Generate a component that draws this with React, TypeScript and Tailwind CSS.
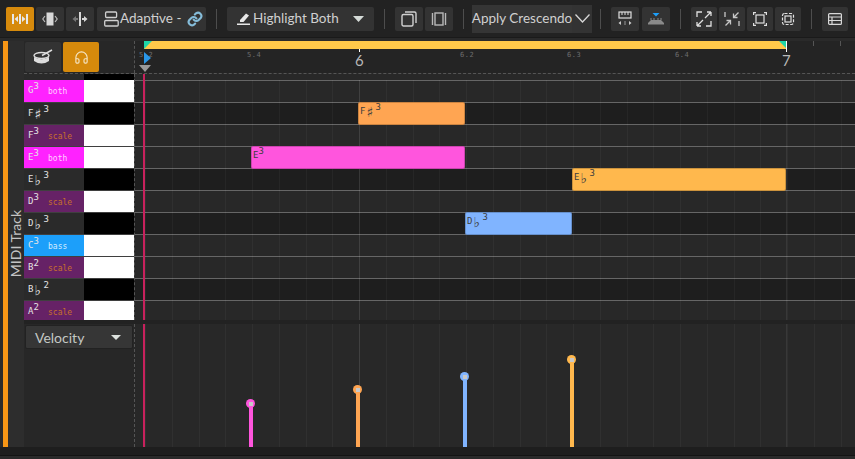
import React from "react";
import { Headphones } from "lucide-react";

type Kind = "both" | "scale" | "bass" | "plain";
const rows: { n: string; acc?: string; o: number; kind: Kind }[] = [
  { n: "G", o: 3, kind: "both" },
  { n: "F", acc: "♯", o: 3, kind: "plain" },
  { n: "F", o: 3, kind: "scale" },
  { n: "E", o: 3, kind: "both" },
  { n: "E", acc: "♭", o: 3, kind: "plain" },
  { n: "D", o: 3, kind: "scale" },
  { n: "D", acc: "♭", o: 3, kind: "plain" },
  { n: "C", o: 3, kind: "bass" },
  { n: "B", o: 2, kind: "scale" },
  { n: "B", acc: "♭", o: 2, kind: "plain" },
  { n: "A", o: 2, kind: "scale" },
];

const beatXs = Array.from({ length: 27 }, (_, i) => 10 + i * 26.75);

function Btn({ active, w = "w-[28px]", children }: { active?: boolean; w?: string; children: React.ReactNode }) {
  return (
    <div className={`${w} h-[24px] rounded-[2px] flex items-center justify-center shrink-0 ${active ? "bg-[#d68a0c]" : "bg-[#333333]"}`}>
      {children}
    </div>
  );
}

function Sep() {
  return <div className="w-px h-[20px] bg-[#4d4d4d] shrink-0" />;
}

function NoteName({ n, acc, o, color }: { n: string; acc?: string; o: number; color: string }) {
  return (
    <div className={`flex items-start leading-none [font-family:'DejaVu_Sans_Mono',monospace] whitespace-nowrap ${color}`}>
      <span className="text-[9px] mt-[4px]">{n}</span>
      {acc && <span className="text-[14px] mt-[2px] ml-px w-[8px] [font-family:'DejaVu_Sans',sans-serif]">{acc}</span>}
      <span className={`text-[9px] ${acc ? "ml-px" : ""}`}>{o}</span>
    </div>
  );
}

function KeyRow({ r, first }: { r: (typeof rows)[number]; first: boolean }) {
  const bg = { both: "bg-[#ff22ff]", scale: "bg-[#662266]", bass: "bg-[#1c9ffa]", plain: "bg-[#2a2a2a]" }[r.kind];
  const labelColor = { both: "text-[#ffd0ff]", scale: "text-[#c8702c]", bass: "text-[#d5ecff]", plain: "" }[r.kind];
  const isBlack = r.kind === "plain";
  const h = r.n === "A" ? "h-[20px]" : "h-[22px]";
  return (
    <div className={`flex ${h} ${first ? "" : "border-t border-[#3f3f3f]"} shrink-0`}>
      <div className={`w-[60px] ${bg} flex items-start pl-[4px] pt-[2px] relative`}>
        <NoteName n={r.n} acc={r.acc} o={r.o} color="text-[#e4e4e4]" />
        {!isBlack && (
          <span className={`absolute left-[24px] top-[8px] text-[8px] leading-none [font-family:'DejaVu_Sans_Mono',monospace] ${labelColor}`}>
            {r.kind}
          </span>
        )}
      </div>
      <div className={`w-[50px] ${isBlack ? "bg-black" : "bg-white"}`} />
    </div>
  );
}

function GridLines({ shift }: { shift: number }) {
  return (
    <>
      {beatXs.map((x, i) => (
        <div key={i} className="absolute top-0 bottom-0 w-px bg-white/[0.04]" style={{ left: Math.round(x) + shift }} />
      ))}
      <div className="absolute top-0 bottom-0 w-px bg-white/[0.08]" style={{ left: 224 + shift }} />
      <div className="absolute top-0 bottom-0 w-px bg-white/[0.08]" style={{ left: 651 + shift }} />
    </>
  );
}

const notes = [
  { n: "F", acc: "♯", left: 224, w: 107, top: 22, c: "bg-[#ffa552]" },
  { n: "E", left: 117, w: 214, top: 66, c: "bg-[#ff55dd]" },
  { n: "E", acc: "♭", left: 438, w: 214, top: 88, c: "bg-[#ffb84d]" },
  { n: "D", acc: "♭", left: 331, w: 107, top: 132, c: "bg-[#80b4ff]" },
];

const stems = [
  { x: 249, top: 80, c: "bg-[#ff55dd]" },
  { x: 356, top: 66, c: "bg-[#ffa552]" },
  { x: 463, top: 53, c: "bg-[#80b4ff]" },
  { x: 570, top: 36, c: "bg-[#ffb84d]" },
];

const rulerLabels = [
  { t: "5.2", x: 4 },
  { t: "5.4", x: 112 },
  { t: "6.2", x: 325 },
  { t: "6.3", x: 432 },
  { t: "6.4", x: 540 },
];

export default function App() {
  return (
    <div className="w-[855px] h-[459px] overflow-hidden bg-[#2a2a2a] flex flex-col [font-family:'Lato',sans-serif]">
      {/* toolbar */}
      <div className="h-[38px] shrink-0 bg-[#222222] border-b border-[#1a1a1a] flex items-center pl-[6px] text-[13.5px] text-[#d0d0d0]">
        <div className="flex gap-[2px]">
          <Btn active>
            <svg width="16" height="12" viewBox="0 0 16 12" fill="#e8e8e8">
              <rect x="0" y="1" width="2" height="10" />
              <rect x="14" y="1" width="2" height="10" />
              <rect x="7" y="1" width="2" height="10" />
              <path d="M2.500 6 L6 3 V9 Z M13.500 6 L10 3 V9 Z" />
            </svg>
          </Btn>
          <Btn>
            <svg width="16" height="14" viewBox="0 0 16 14" fill="none">
              <rect x="4.500" y="0.500" width="7" height="13" fill="#d8d8d8" />
              <path d="M3 4 L0.800 7 L3 10 M13 4 L15.200 7 L13 10" stroke="#bbbbbb" strokeWidth="1.200" />
            </svg>
          </Btn>
          <Btn>
            <svg width="16" height="14" viewBox="0 0 16 14">
              <rect x="7" y="0" width="2" height="14" fill="#d8d8d8" />
              <path d="M0.500 7 L4 4 V6 H6 V8 H4 V10 Z" fill="#777777" />
              <path d="M15.500 7 L12 4 V6 H10 V8 H12 V10 Z" fill="#d8d8d8" />
            </svg>
          </Btn>
        </div>
        <div className="ml-[3px]">
          <Btn w="w-[109px]">
            <div className="flex items-center w-full pl-[7px] whitespace-nowrap">
              <svg width="15" height="16" viewBox="0 0 15 16" fill="none" stroke="#d0d0d0" strokeWidth="1.300" className="mr-px shrink-0">
                <rect x="1.600" y="1" width="11" height="5.500" rx="1" />
                <rect x="0.700" y="9.500" width="13.500" height="5.500" rx="1" />
              </svg>
              <span>Adaptive -</span>
              <svg width="16" height="16" viewBox="0 0 24 24" fill="none" stroke="#85bcd9" strokeWidth="3.200" strokeLinecap="round" className="ml-[6px] shrink-0">
                <path d="M10 13a5 5 0 0 0 7.500.5l3-3a5 5 0 0 0-7-7l-1.700 1.700" />
                <path d="M14 11a5 5 0 0 0-7.500-.5l-3 3a5 5 0 0 0 7 7l1.700-1.700" />
              </svg>
            </div>
          </Btn>
        </div>
        <div className="ml-[10px]"><Sep /></div>
        <div className="ml-[10px]">
          <Btn w="w-[147px]">
            <div className="flex items-center w-full pl-[10px] whitespace-nowrap">
              <svg width="13" height="14" viewBox="0 0 13 14" className="shrink-0 mr-[3px]" fill="#e8e8e8">
                <path d="M3 8 L9 1.500 L12 3.500 L6.500 10 H3 Z" />
                <rect x="0" y="11.500" width="13" height="1.500" />
              </svg>
              <span>Highlight Both</span>
              <svg width="11" height="6" viewBox="0 0 11 6" className="ml-auto mr-[10px] shrink-0"><path d="M0 0 H11 L5.500 6 Z" fill="#d5dbd8" /></svg>
            </div>
          </Btn>
        </div>
        <div className="ml-[10px]"><Sep /></div>
        <div className="ml-[10px] flex gap-[2px]">
          <Btn>
            <svg width="16" height="16" viewBox="0 0 16 16" fill="none" stroke="#d0d0d0" strokeWidth="1.400">
              <rect x="1" y="3.500" width="11" height="11.500" rx="1.500" />
              <path d="M4 1 H13.500 Q15 1 15 2.500 V12" />
            </svg>
          </Btn>
          <Btn>
            <svg width="16" height="14" viewBox="0 0 16 14" fill="none" stroke="#b8b8b8" strokeWidth="1.400">
              <rect x="4" y="1" width="8" height="12" />
              <path d="M1.500 1 V13 M14.500 1 V13" />
            </svg>
          </Btn>
        </div>
        <div className="ml-[10px]"><Sep /></div>
        <div className="ml-[8px] flex">
          <div className="w-[100px] h-[28px] bg-[#353535] flex items-center justify-center whitespace-nowrap">Apply Crescendo</div>
          <div className="w-[20px] h-[28px] bg-[#333333] flex items-center justify-center">
            <svg width="15" height="9" viewBox="0 0 15 9" fill="none" stroke="#d8d8d8" strokeWidth="1.300"><path d="M0.500 0.500 L7.500 8 L14.500 0.500" /></svg>
          </div>
        </div>
        <div className="ml-[8px]"><Sep /></div>
        <div className="ml-[10px] flex gap-[3px]">
          <Btn>
            <svg width="14" height="16" viewBox="0 0 14 16" fill="none">
              <rect x="1" y="1" width="12" height="6" stroke="#e0e0e0" strokeWidth="1.200" />
              <path d="M4 1 V4 M7 1 V4 M10 1 V4" stroke="#e0e0e0" />
              <path d="M3 10 L0.500 12 L3 14 Z M11 10 L13.500 12 L11 14 Z" fill="#cccccc" />
              <rect x="6.500" y="10" width="1" height="4" fill="#999999" />
            </svg>
          </Btn>
          <Btn>
            <svg width="16" height="12" viewBox="0 0 16 12" fill="#8a8a8a">
              <path d="M4.500 0 H11.500 L8 3.500 Z" fill="#1c9ffa" />
              <path d="M0 10 L3 7 H13 L16 10 V11.500 H0 Z" />
              <path d="M3 7 V5 M6 7 V5 M10 7 V5 M13 7 V5" stroke="#8a8a8a" />
            </svg>
          </Btn>
        </div>
        <div className="ml-[10px]"><Sep /></div>
        <div className="ml-[10px] flex gap-[2px]">
          <Btn w="w-[26px]">
            <svg width="16" height="16" viewBox="0 0 16 16" fill="none" stroke="#e0e0e0" strokeWidth="1.300">
              <path d="M1 6 V1 H6 M15 10 V15 H10" />
              <path d="M9 7 L15 1 M15 1 H11 M15 1 V5 M7 9 L1 15 M1 15 H5 M1 15 V11" />
            </svg>
          </Btn>
          <Btn w="w-[26px]">
            <svg width="16" height="16" viewBox="0 0 16 16" fill="none" stroke="#c8c8c8" strokeWidth="1.300">
              <path d="M1 6 V1 M15 10 V15" />
              <path d="M14.500 1.500 L9.500 6.500 M9.500 2.500 V6.500 H13.500 M1.500 14.500 L6.500 9.500 M6.500 13.500 V9.500 H2.500" />
            </svg>
          </Btn>
          <Btn w="w-[26px]">
            <svg width="14" height="14" viewBox="0 0 14 14" fill="none" stroke="#e0e0e0" strokeWidth="1.200">
              <rect x="3" y="3" width="8" height="8" />
              <path d="M0.600 3 V0.600 H3 M11 0.600 H13.400 V3 M13.400 11 V13.400 H11 M3 13.400 H0.600 V11" />
            </svg>
          </Btn>
          <Btn w="w-[26px]">
            <svg width="14" height="14" viewBox="0 0 14 14" fill="none" stroke="#e0e0e0" strokeWidth="1.200">
              <rect x="4" y="4" width="6" height="6" />
              <rect x="1.500" y="1.500" width="11" height="11" rx="2" strokeDasharray="3 1.500" />
            </svg>
          </Btn>
        </div>
        <div className="ml-[10px]"><Sep /></div>
        <div className="ml-[10px]">
          <Btn w="w-[26px]">
            <svg width="14" height="12" viewBox="0 0 14 12" fill="none" stroke="#d8d8d8" strokeWidth="1.200">
              <rect x="0.600" y="0.600" width="12.800" height="10.800" rx="1" />
              <path d="M0.600 4 H13.400 M0.600 7.500 H13.400 M4 4 V11" />
            </svg>
          </Btn>
        </div>
      </div>

      {/* main */}
      <div className="flex-1 min-h-0 flex pt-[3px]">
        <div className="w-[3px] shrink-0" />
        <div className="w-[5px] shrink-0 bg-[#f79616]" />
        <div className="w-[16px] shrink-0 bg-[#2d2d2d] flex items-center justify-center">
          <span className="[writing-mode:vertical-rl] rotate-180 text-[14px] leading-none text-[#c4c4c4] whitespace-nowrap">MIDI Track</span>
        </div>

        <div className="flex-1 min-w-0 flex flex-col">
          {/* ruler row */}
          <div className="flex h-[32px] shrink-0">
            <div className="w-[110px] shrink-0 bg-[#272727] flex gap-[2px] pl-px pt-px">
              <div className="w-[36px] h-[30px] rounded-[2px] bg-[#333333] flex items-center justify-center">
                <svg width="20" height="16" viewBox="0 0 20 16" fill="none">
                  <ellipse cx="8.500" cy="6.500" rx="7.500" ry="3" stroke="#dddddd" strokeWidth="1.400" />
                  <path d="M1 8 V12 Q8.500 17 16 12 V8 Q8.500 12.500 1 8 Z" fill="#dddddd" />
                  <path d="M9 6.500 L19 1" stroke="#dddddd" strokeWidth="1.500" />
                </svg>
              </div>
              <div className="w-[36px] h-[30px] rounded-[2px] bg-[#d68a0c] flex items-center justify-center">
                <Headphones size={15} color="#f5e6c8" strokeWidth={1.800} />
              </div>
            </div>
            <div className="flex-1 relative bg-[#242424] border-l border-dashed border-[#555555] overflow-hidden">
              <div className="absolute left-[9px] top-0 w-[643px] h-[8px] bg-[#ffc84a]" />
              <svg className="absolute left-[9px] top-0" width="8" height="8"><path d="M0 0 H8 L0 8 Z" fill="#1fd6a8" /></svg>
              <svg className="absolute left-[644px] top-0" width="8" height="8"><path d="M0 0 H8 V8 Z" fill="#1fd6a8" /></svg>
              {rulerLabels.map((l) => (
                <span key={l.t} className="absolute top-[11px] text-[7px] leading-none text-[#6e6e6e] [font-family:'DejaVu_Sans_Mono',monospace] tracking-[0.5px]" style={{ left: l.x }}>
                  {l.t}
                </span>
              ))}
              <svg className="absolute left-[9px] top-[11px]" width="8" height="12"><path d="M0 0 L7 6 L0 12 Z" fill="#2a97e8" /></svg>
              <svg className="absolute left-[4px] top-[24px]" width="12" height="7"><path d="M0 0 H12 L6 7 Z" fill="#9a9a9a" /></svg>
              <div className="absolute left-[224px] top-[8px] w-px h-[3px] bg-white" />
              <div className="absolute left-[651px] top-0 w-px h-[11px] bg-white" />
              <div className="absolute left-[678px] top-0 w-px h-[5px] bg-[#555555]" />
              <div className="absolute left-[705px] top-0 w-px h-[5px] bg-[#555555]" />
              <span className="absolute left-[220px] top-[12px] text-[15px] leading-none text-[#b8b8b8]">6</span>
              <span className="absolute left-[647px] top-[12px] text-[15px] leading-none text-[#b8b8b8]">7</span>
            </div>
          </div>

          {/* piano + roll */}
          <div className="h-[247px] shrink-0 flex">
            <div className="w-[110px] shrink-0 flex flex-col border-t border-dashed border-[#555555]">
              <div className="h-[6px] shrink-0 flex">
                <div className="w-[60px] bg-[#2a2a2a]" />
                <div className="w-[50px] bg-black" />
              </div>
              {rows.map((r, i) => <KeyRow key={i} r={r} first={i === 0} />)}
            </div>
            <div className="flex-1 relative flex flex-col border-t border-dashed border-[#555555] overflow-hidden">
              <div className="absolute left-0 top-0 bottom-0 border-l border-dashed border-[#555555] z-10" />
              <div className="h-[6px] shrink-0 bg-[#282828]" />
              {rows.map((r, i) => (
                <div key={i} className={`${r.n === "A" ? "h-[20px]" : "h-[22px]"} shrink-0 border-t border-[#666666] ${r.kind === "plain" ? "bg-[#1e1e1e]" : "bg-[#282828]"}`} />
              ))}
              <div className="absolute left-0 right-0 top-[6px] bottom-0">
                <GridLines shift={1} />
                {notes.map((n, i) => (
                  <div key={i} className={`absolute h-[23px] rounded-[2px] border border-black/20 pl-px ${n.c}`} style={{ left: n.left, width: n.w, top: n.top }}>
                    <NoteName n={n.n} acc={n.acc} o={3} color="text-[#3d3d3d]" />
                  </div>
                ))}
              </div>
              <div className="absolute left-[9px] top-0 bottom-0 w-[2px] bg-[#c8215d] z-10" />
            </div>
          </div>

          {/* separator */}
          <div className="h-[4px] shrink-0 bg-[#222222]" />

          {/* velocity lane */}
          <div className="flex-1 min-h-0 flex">
            <div className="w-[110px] shrink-0 bg-[#272727] pl-px pt-px">
              <div className="w-[108px] h-[24px] rounded-[2px] bg-[#363636] border border-[#222222] flex items-center pl-[9px] pr-[11px] text-[14px] text-[#c4c8c4]">
                <span>Velocity</span>
                <svg width="10" height="5" viewBox="0 0 10 5" className="ml-auto"><path d="M0 0 H10 L5 5 Z" fill="#dde2de" /></svg>
              </div>
            </div>
            <div className="flex-1 relative bg-[#282828] border-l border-dashed border-[#555555] overflow-hidden">
              <GridLines shift={0} />
              {stems.map((s, i) => (
                <div key={i}>
                  <div className={`absolute w-[4px] bottom-0 ${s.c}`} style={{ left: s.x - 135, top: s.top }} />
                  <div className={`absolute w-[9px] h-[9px] rounded-full flex items-center justify-center ${s.c}`} style={{ left: s.x - 138, top: s.top - 5 }}>
                    <div className="w-[4px] h-[4px] bg-[#c8c8c8]" />
                  </div>
                </div>
              ))}
              <div className="absolute left-[8px] top-0 bottom-0 w-[2px] bg-[#c8215d]" />
            </div>
          </div>
        </div>
      </div>

      {/* bottom */}
      <div className="h-[9px] shrink-0 bg-[#1e1e1e] border-b border-[#141414]" />
      <div className="h-[3px] shrink-0 bg-[#2a2a2a]" />
    </div>
  );
}
